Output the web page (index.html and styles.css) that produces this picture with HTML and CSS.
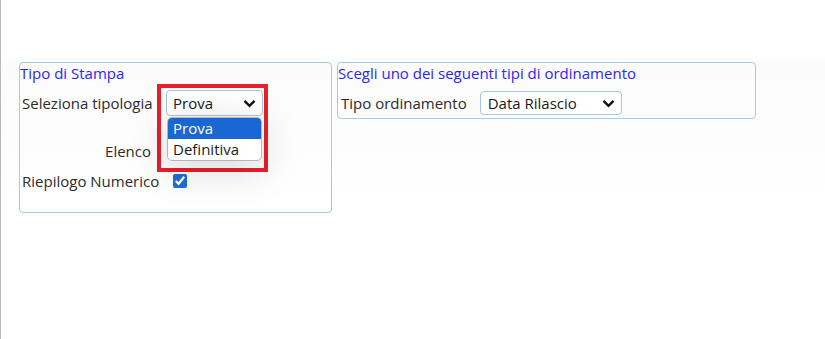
FILE: index.html
```html
<!DOCTYPE html>
<html lang="it">
<head>
    <meta charset="UTF-8">
    <title>Stampa</title>
    <link rel="stylesheet" href="styles.css">
</head>
<body>
    <div class="page">
        <div class="box box-stampa">
            <div class="box-title">Tipo di Stampa</div>
            <div class="form-grid">
                <div class="label">Seleziona tipologia</div>
                <div class="field">
                    <div class="select select-tipo">
                        <span>Prova</span>
                        <svg class="chev" width="13" height="9" viewBox="0 0 13 9"><path d="M1.5 1.8 L6.5 6.8 L11.5 1.8" fill="none" stroke="#111" stroke-width="2.4"/></svg>
                    </div>
                </div>

                <div class="spacer"></div>
                <div class="spacer"></div>

                <div class="label label-right">Elenco</div>
                <div class="field"><input type="checkbox" class="check"></div>

                <div class="label">Riepilogo Numerico</div>
                <div class="field"><input type="checkbox" class="check" checked></div>
            </div>

            <div class="highlight"></div>
            <ul class="popup">
                <li class="selected">Prova</li>
                <li>Definitiva</li>
            </ul>
        </div>

        <div class="box box-ordine">
            <div class="box-title">Scegli uno dei seguenti tipi di ordinamento</div>
            <div class="ordine-row">
                <div class="label">Tipo ordinamento</div>
                <div class="select select-ordine">
                    <span>Data Rilascio</span>
                    <svg class="chev" width="13" height="9" viewBox="0 0 13 9"><path d="M1.5 1.8 L6.5 6.8 L11.5 1.8" fill="none" stroke="#111" stroke-width="2.4"/></svg>
                </div>
            </div>
        </div>
    </div>
</body>
</html>
```

FILE: styles.css
```css
html, body {
    margin: 0;
    height: 100%;
    background: #ffffff;
}

body {
    border-left: 1px solid #b9b9b9;
    box-sizing: border-box;
    font-family: 'Open Sans', 'Noto Sans', sans-serif;
    font-size: 15px;
    color: #2b2b2b;
    overflow: hidden;
}

.page {
    display: flex;
    align-items: flex-start;
    gap: 5px;
    padding: 62px 0 0 18px;
    height: 150px;
    background: linear-gradient(to bottom, #ffffff 58px, #fbfbfb 62px, #ffffff 210px);
}

.box {
    border: 1px solid #a6cbe3;
    border-radius: 4px;
    box-sizing: border-box;
    position: relative;
}

.box-stampa {
    width: 313px;
    height: 151px;
}

.box-ordine {
    width: 419px;
    height: 57px;
}

.box-title {
    color: #2f24f6;
    line-height: 20px;
}

.form-grid {
    display: grid;
    grid-template-columns: 136px auto;
    grid-template-rows: 30px 18px 30px 30px;
    column-gap: 8px;
    padding: 5px 0 0 2px;
    align-items: center;
}

.label {
    line-height: 20px;
    white-space: nowrap;
}

.label-right {
    text-align: right;
    padding-right: 7px;
}

.field {
    display: flex;
    align-items: center;
}

.check {
    margin: 0 0 0 7px;
    width: 14px;
    height: 14px;
    accent-color: #1b6ed8;
}

.select {
    display: flex;
    align-items: center;
    justify-content: space-between;
    border: 1px solid #a9c4dc;
    border-radius: 4px;
    box-sizing: border-box;
    background: #fff;
    color: #1a1a1a;
    padding: 0 6px;
}

.select-tipo {
    width: 97px;
    height: 26px;
}

.select-ordine {
    width: 142px;
    height: 24px;
    padding-left: 7px;
}

.chev {
    display: block;
}

.ordine-row {
    display: flex;
    align-items: center;
    gap: 13px;
    padding: 8px 0 0 3px;
}

.highlight {
    position: absolute;
    left: 137px;
    top: 21px;
    width: 111px;
    height: 88px;
    border: 4px solid #e6202a;
    box-sizing: border-box;
}

.popup {
    position: absolute;
    left: 147px;
    top: 54px;
    width: 95px;
    margin: 0;
    padding: 0;
    list-style: none;
    background: #fff;
    border: 1px solid #b5b5b5;
    border-radius: 5px;
    box-sizing: border-box;
    box-shadow: 0 8px 40px rgba(0, 0, 0, 0.16);
    overflow: hidden;
    color: #1a1a1a;
}

.popup li {
    height: 21px;
    line-height: 21px;
    padding-left: 5px;
}

.popup li.selected {
    background: #1a66d2;
    color: #fff;
}
```
